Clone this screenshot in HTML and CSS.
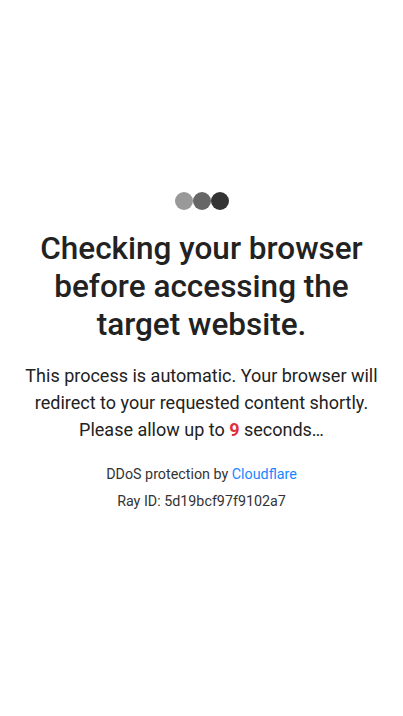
FILE: index.html
```html
<!DOCTYPE html>
<html>
<head>
<meta charset="utf-8">
<link rel="stylesheet" href="styles.css">
</head>
<body>
<main class="page">
  <div class="dots">
    <span class="dot d1"></span><span class="dot d2"></span><span class="dot d3"></span>
  </div>
  <h1 class="title">Checking your browser before accessing the target website.</h1>
  <p class="lead">This process is automatic. Your browser will redirect to your requested content shortly. Please allow up to <span class="count">9</span> seconds…</p>
  <div class="meta">
    <div>DDoS protection by <a class="link" href="#">Cloudflare</a></div>
    <div>Ray ID: 5d19bcf97f9102a7</div>
  </div>
</main>
</body>
</html>
```
FILE: styles.css
```css
html, body { margin: 0; padding: 0; background: #fff; }
body { font-family: Roboto, "Noto Sans", sans-serif; color: #222; }
.page { display: flex; flex-direction: column; align-items: center; text-align: center; padding: 192px 16px 0; }
.dots { display: flex; height: 18px; }
.dot { width: 18px; height: 18px; border-radius: 50%; display: block; }
.d1 { background: #999; }
.d2 { background: #666; }
.d3 { background: #333; }
.title { font-size: 31.5px; font-weight: 500; line-height: 38px; margin: 20px 0 0; color: #222; }
.lead { font-size: 18px; line-height: 27px; margin: 18px 0 0; color: #222; }
.count { color: #e0313a; font-weight: 700; }
.meta { margin-top: 18px; font-size: 14.3px; line-height: 27px; color: #333; }
.link { color: #1a87ff; text-decoration: none; }
```
